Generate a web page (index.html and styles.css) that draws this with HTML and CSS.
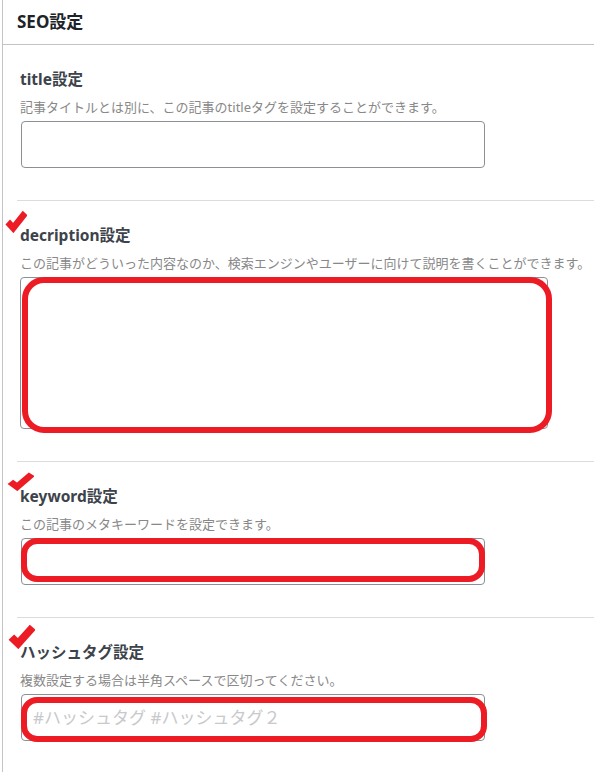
FILE: index.html
```html
<!DOCTYPE html>
<html lang="ja">
<head>
  <meta charset="UTF-8">
  <title>SEO設定</title>
  <meta name="viewport" content="width=device-width, initial-scale=1">
  <link rel="stylesheet" href="styles.css">
</head>
<body>
  <div class="panel">
    <h2 class="panel-title">SEO設定</h2>

    <div class="section">
      <label class="field-label" for="seo-title">title設定</label>
      <p class="field-desc">記事タイトルとは別に、この記事のtitleタグを設定することができます。</p>
      <div class="field">
        <input type="text" id="seo-title" class="text-input">
      </div>
    </div>

    <div class="section">
      <svg class="check check-desc" viewBox="0 0 24 24" preserveAspectRatio="none"><polyline points="3,13 9,19 22,4"/></svg>
      <label class="field-label" for="seo-desc">decription設定</label>
      <p class="field-desc">この記事がどういった内容なのか、検索エンジンやユーザーに向けて説明を書くことができます。</p>
      <div class="field">
        <textarea id="seo-desc" class="text-area"></textarea>
        <div class="mark mark-area"></div>
      </div>
    </div>

    <div class="section">
      <svg class="check check-key" viewBox="0 0 24 24" preserveAspectRatio="none"><polyline points="3,13 9,19 22,4"/></svg>
      <label class="field-label" for="seo-keyword">keyword設定</label>
      <p class="field-desc">この記事のメタキーワードを設定できます。</p>
      <div class="field">
        <input type="text" id="seo-keyword" class="text-input">
        <div class="mark mark-key"></div>
      </div>
    </div>

    <div class="section">
      <svg class="check check-tag" viewBox="0 0 24 24" preserveAspectRatio="none"><polyline points="3,13 9,19 22,4"/></svg>
      <label class="field-label" for="seo-hashtag">ハッシュタグ設定</label>
      <p class="field-desc">複数設定する場合は半角スペースで区切ってください。</p>
      <div class="field">
        <input type="text" id="seo-hashtag" class="text-input tag-input" placeholder="#ハッシュタグ #ハッシュタグ２">
        <div class="mark mark-tag"></div>
      </div>
    </div>
  </div>
</body>
</html>
```

FILE: styles.css
```css
body { margin: 0; background: #fff; font-family: "Noto Sans", "Noto Sans CJK JP", sans-serif; color: #3c434a; }
.panel { margin-left: 2px; border-left: 1px solid #c3c4c7; min-height: 100vh; }
.panel-title { margin: 0; padding: 0 14px; height: 44px; line-height: 44px; font-size: 17px; font-weight: bold; color: #1d2327; border-bottom: 1px solid #c3c4c7; }

.section { position: relative; margin-left: 14px; padding: 24px 0 32px 3px; border-top: 1px solid #dcdcde; }
.panel-title + .section { border-top: none; }

.field-label { display: block; font-size: 15.5px; line-height: 20px; font-weight: bold; color: #3c434a; }
.field-desc { margin: 9px 0 5px; font-size: 13px; line-height: 18px; color: #888; }

.field { position: relative; }
.text-input, .text-area {
  display: block; box-sizing: border-box; border: 1px solid #8c8f94; border-radius: 4px;
  background: #fff; font-family: inherit; font-size: 17px; margin: 0;
}
.text-input { width: 464px; height: 47px; margin-left: 1px; padding: 0 11px; }
.text-area { width: 528px; height: 152px; }
.tag-input::placeholder { color: #c8c9cc; }

/* red annotations */
.check { position: absolute; fill: none; stroke: #ed1c24; stroke-width: 7; stroke-linejoin: miter; stroke-linecap: butt; }
.check-desc { left: -12px; top: 8px; width: 22px; height: 24px; }
.check-key { left: -10px; top: 9px; width: 27px; height: 20px; }
.check-tag { left: -9px; top: 5px; width: 27px; height: 26px; }

.mark { position: absolute; box-sizing: border-box; border: 6px solid #ed1c24; pointer-events: none; }
.mark-area { left: 2px; top: 0; width: 530px; height: 156px; border-radius: 22px; }
.mark-key { left: 1px; top: 0; width: 464px; height: 44px; border-radius: 16px; }
.mark-tag { left: 1px; top: 3px; width: 466px; height: 45px; border-radius: 16px; }
```
